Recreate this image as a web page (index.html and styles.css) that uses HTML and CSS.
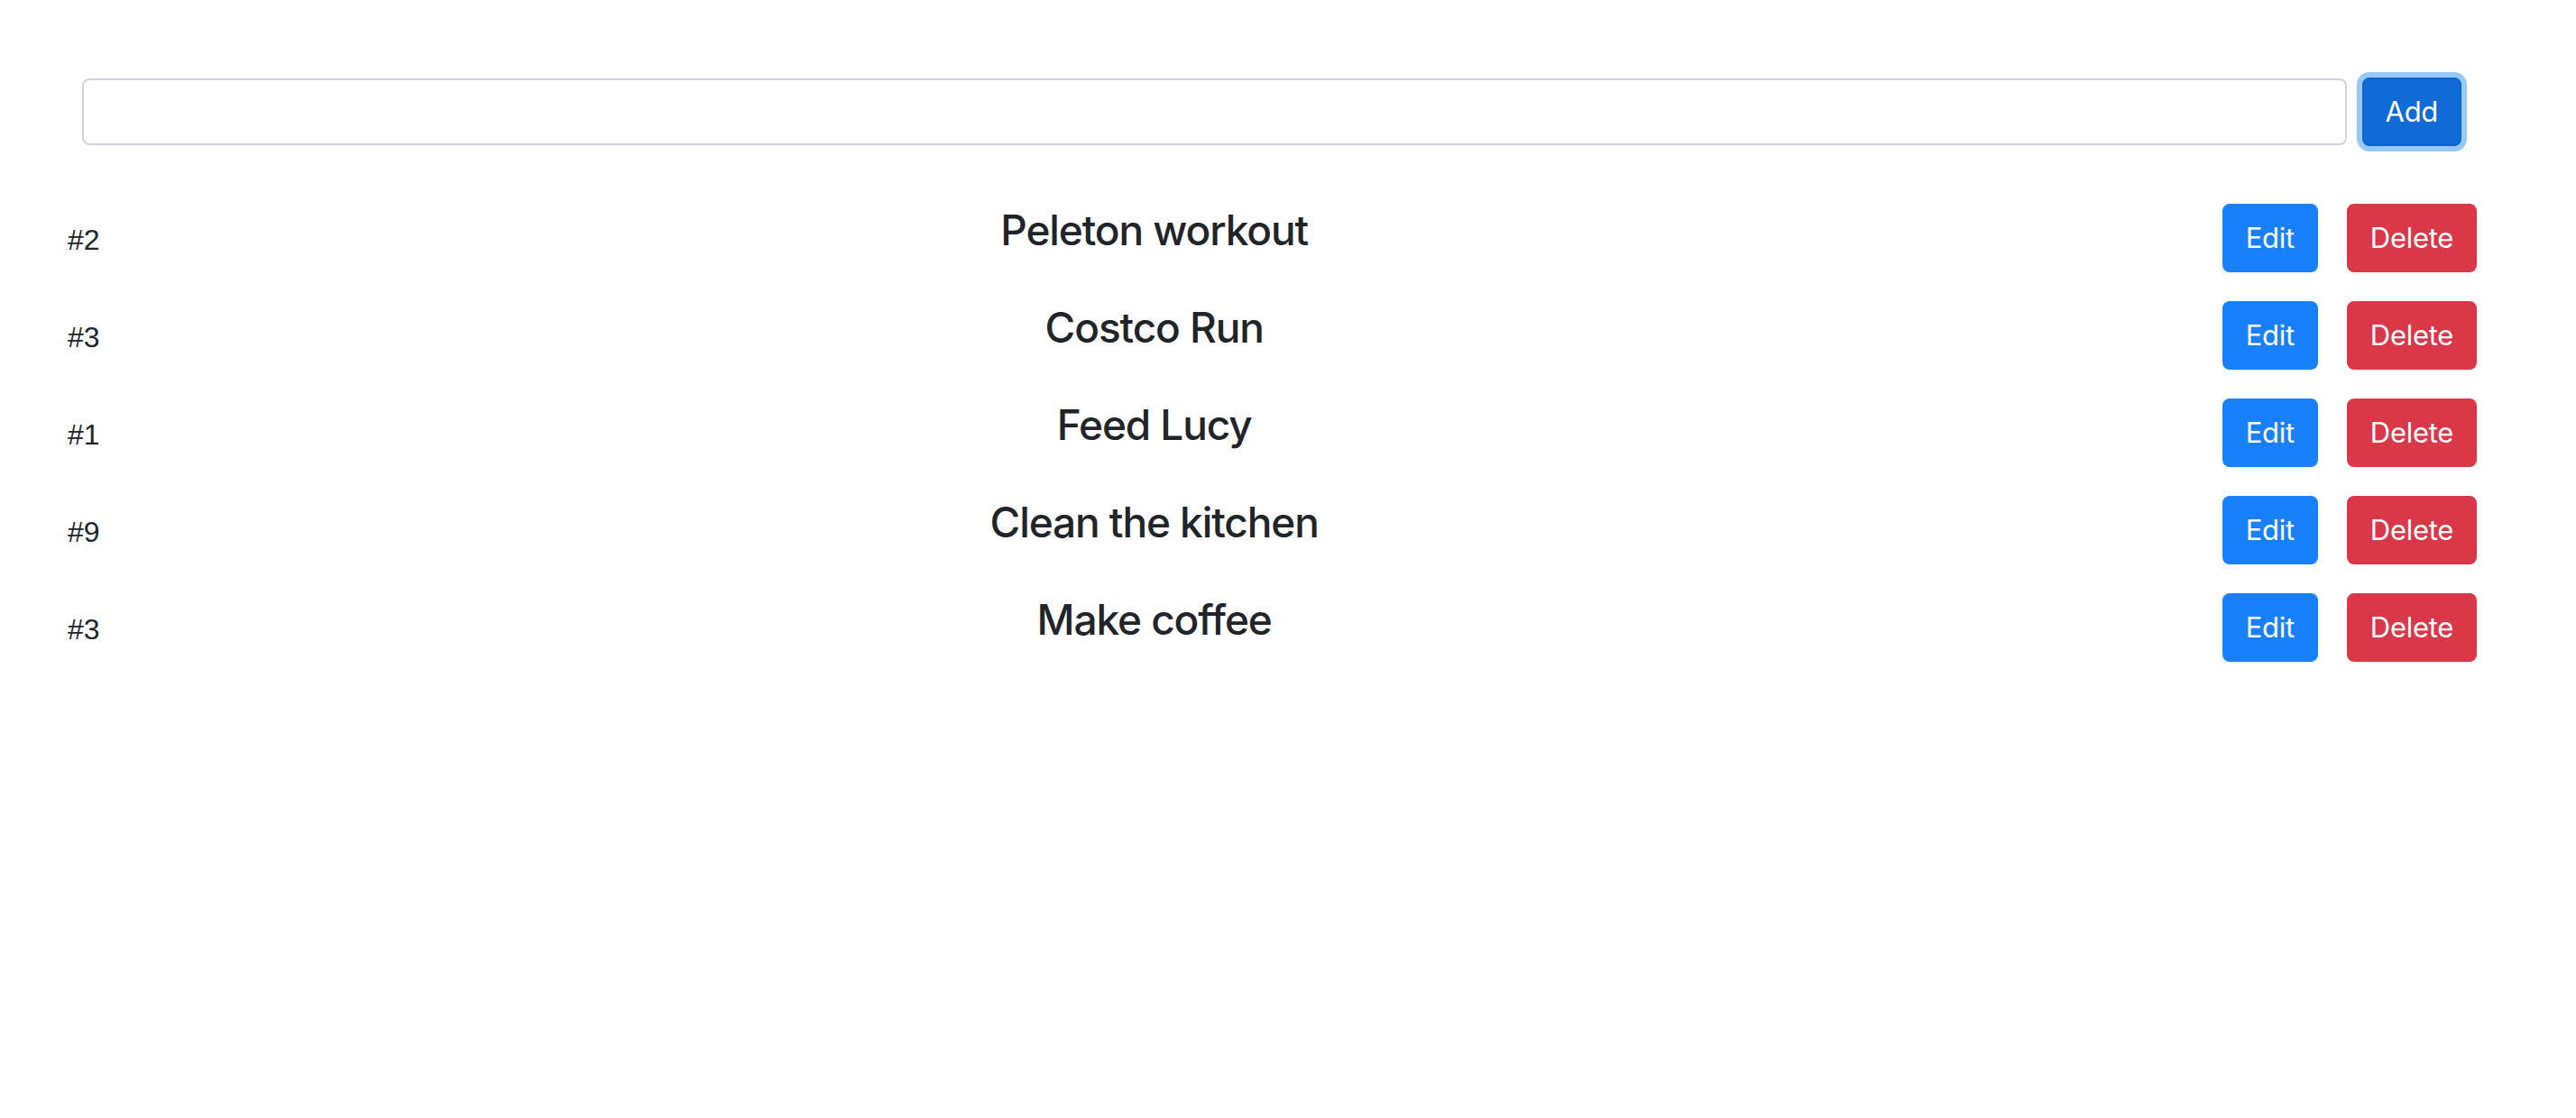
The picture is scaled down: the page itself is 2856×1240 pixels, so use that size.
FILE: index.html
```html
<!DOCTYPE html>
<html lang="en">
<head>
<meta charset="utf-8">
<title>Todo List</title>
<link rel="stylesheet" href="styles.css">
</head>
<body>
<div class="app">
  <form class="add-form">
    <input class="add-input" type="text">
    <button class="btn btn-add" type="button">Add</button>
  </form>
  <ul class="todo-list">
    <li class="todo">
      <span class="todo-id">#2</span>
      <h4 class="todo-title">Peleton workout</h4>
      <div class="todo-actions">
        <button class="btn btn-edit" type="button">Edit</button>
        <button class="btn btn-delete" type="button">Delete</button>
      </div>
    </li>
    <li class="todo">
      <span class="todo-id">#3</span>
      <h4 class="todo-title">Costco Run</h4>
      <div class="todo-actions">
        <button class="btn btn-edit" type="button">Edit</button>
        <button class="btn btn-delete" type="button">Delete</button>
      </div>
    </li>
    <li class="todo">
      <span class="todo-id">#1</span>
      <h4 class="todo-title">Feed Lucy</h4>
      <div class="todo-actions">
        <button class="btn btn-edit" type="button">Edit</button>
        <button class="btn btn-delete" type="button">Delete</button>
      </div>
    </li>
    <li class="todo">
      <span class="todo-id">#9</span>
      <h4 class="todo-title">Clean the kitchen</h4>
      <div class="todo-actions">
        <button class="btn btn-edit" type="button">Edit</button>
        <button class="btn btn-delete" type="button">Delete</button>
      </div>
    </li>
    <li class="todo">
      <span class="todo-id">#3</span>
      <h4 class="todo-title">Make coffee</h4>
      <div class="todo-actions">
        <button class="btn btn-edit" type="button">Edit</button>
        <button class="btn btn-delete" type="button">Delete</button>
      </div>
    </li>
  </ul>
</div>
</body>
</html>
```
FILE: styles.css
```css
html, body {
  margin: 0;
  padding: 0;
  background: #ffffff;
}

body {
  font-family: Inter, "Noto Sans", sans-serif;
  color: #212529;
}

.app {
  display: flex;
  flex-direction: column;
}

.add-form {
  display: flex;
  align-items: center;
  gap: 17px;
  padding: 86px 127px 0 91px;
  margin: 0;
}

.add-input {
  flex: 1;
  box-sizing: border-box;
  height: 74px;
  border: 2px solid #ced4da;
  border-radius: 8px;
  background: #ffffff;
  font-family: inherit;
  font-size: 32px;
  padding: 0 24px;
  outline: none;
}

.btn {
  box-sizing: border-box;
  height: 76px;
  padding: 0 24px;
  border: 2px solid transparent;
  border-radius: 8px;
  font-family: Inter, "Noto Sans", sans-serif;
  font-size: 31px;
  font-weight: 400;
  letter-spacing: -0.3px;
  line-height: 48px;
  color: #ffffff;
  cursor: pointer;
}

.btn-add {
  background: #116bd6;
  border-color: #0f64c9;
  box-shadow: 0 0 0 6px #95c8fd;
}

.btn-edit {
  background: #1880fb;
  border-color: #1880fb;
}

.btn-delete {
  background: #da3749;
  border-color: #da3749;
}

.todo-list {
  list-style: none;
  margin: 64px 0 0 0;
  padding: 0 110px 0 75px;
}

.todo {
  display: flex;
  align-items: center;
  margin-bottom: 32px;
}

.todo-id {
  font-family: "Liberation Sans", Arial, sans-serif;
  font-size: 32px;
  line-height: 48px;
  margin-top: 4px;
}

.todo-title {
  flex: 1;
  margin: 0 0 16px 0;
  text-align: center;
  font-size: 46px;
  font-weight: 500;
  letter-spacing: -1.1px;
  line-height: 1.25;
}

.todo-actions {
  display: flex;
  gap: 32px;
  margin-left: 15px;
}
```
